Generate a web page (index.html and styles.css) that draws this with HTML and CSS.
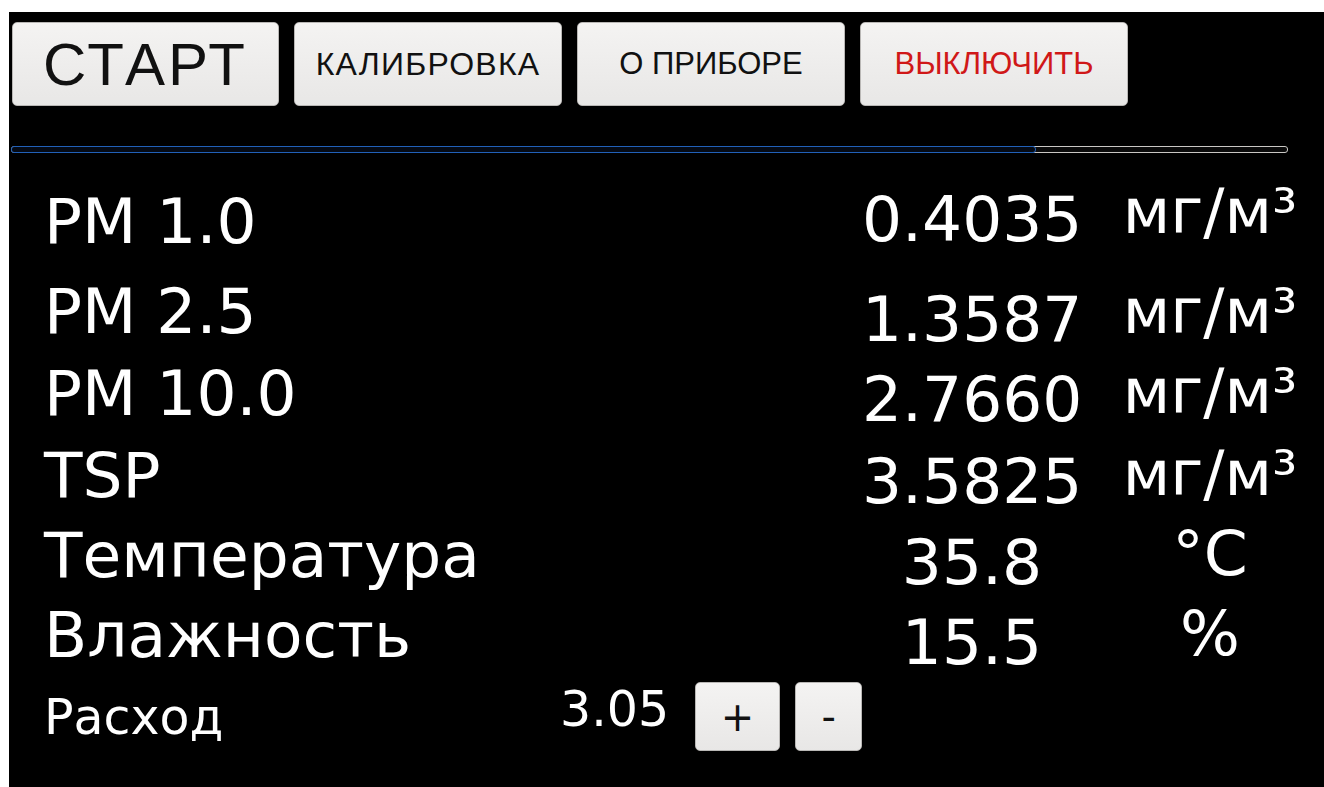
FILE: index.html
```html
<!DOCTYPE html>
<html lang="ru">
<head>
<meta charset="utf-8">
<title>Пылемер</title>
<link rel="stylesheet" href="styles.css">
</head>
<body>
<main class="panel">
  <nav class="toolbar">
    <button class="btn btn-start">СТАРТ</button>
    <button class="btn btn-calib">КАЛИБРОВКА</button>
    <button class="btn">О ПРИБОРЕ</button>
    <button class="btn btn-off">ВЫКЛЮЧИТЬ</button>
  </nav>

  <div class="progress"><div class="progress-fill" style="width: 80.4%"></div></div>

  <section class="readings">
    <div class="label">PM 1.0</div>
    <div class="value v-r1">0.4035</div>
    <div class="unit u-r1">мг/м³</div>

    <div class="label">PM 2.5</div>
    <div class="value v-r2">1.3587</div>
    <div class="unit">мг/м³</div>

    <div class="label">PM 10.0</div>
    <div class="value v-r3">2.7660</div>
    <div class="unit u-r3">мг/м³</div>

    <div class="label">TSP</div>
    <div class="value v-r3">3.5825</div>
    <div class="unit u-r3">мг/м³</div>

    <div class="label">Температура</div>
    <div class="value v-r5">35.8</div>
    <div class="unit u-r3">°C</div>

    <div class="label">Влажность</div>
    <div class="value v-r5">15.5</div>
    <div class="unit u-r3">%</div>

    <div class="flow-row">
      <div class="flow-label">Расход</div>
      <div class="flow-value">3.05</div>
      <div class="flow-buttons">
        <button class="btn btn-small btn-plus">+</button>
        <button class="btn btn-small btn-minus">-</button>
      </div>
    </div>
  </section>
</main>
</body>
</html>
```

FILE: styles.css
```css
html, body {
  margin: 0;
  padding: 0;
  background: #ffffff;
}

.panel {
  margin: 12px 0 0 9px;
  width: 1315px;
  height: 775px;
  background: #000000;
  box-sizing: border-box;
  padding: 10px 0 0 0;
  overflow: hidden;
}

/* top button bar */
.toolbar {
  display: flex;
  gap: 15px;
  padding-left: 3px;
}

.btn {
  font-family: "Liberation Sans", Arial, sans-serif;
  color: #111111;
  background: linear-gradient(#f4f3f2, #e8e7e6);
  border: 1px solid #b9b7b5;
  border-radius: 5px;
  padding: 0;
  margin: 0;
  display: flex;
  align-items: center;
  justify-content: center;
  cursor: pointer;
}

.toolbar .btn {
  width: 268px;
  height: 84px;
  font-size: 31px;
}

.toolbar .btn-start {
  font-size: 60px;
  letter-spacing: 3px;
  width: 267px;
}

.toolbar .btn-calib {
  font-size: 32px;
  letter-spacing: 1.2px;
}

.toolbar .btn-off {
  color: #d01818;
}

/* progress indicator */
.progress {
  margin: 40px 0 0 2px;
  width: 1277px;
  height: 7px;
  box-sizing: border-box;
  border: 1px solid #c9c7c4;
  border-radius: 3px;
  background: #0a0a0a;
  position: relative;
}

.progress-fill {
  position: absolute;
  left: -1px;
  top: -1px;
  height: 7px;
  box-sizing: border-box;
  border: 1.5px solid #2160b8;
  border-radius: 3px;
  background: #050a14;
}

/* measurement table */
.readings {
  margin-top: 38px;
  padding-left: 35px;
  display: grid;
  grid-template-columns: 818px 220px 256px;
  grid-template-rows: 90px 82px 82px 80px 80px 80px auto;
  font-family: "DejaVu Sans", "Noto Sans", sans-serif;
  color: #ffffff;
  font-size: 63px;
  line-height: 62px;
}

.label,
.value,
.unit {
  align-self: start;
  white-space: nowrap;
}

.value {
  text-align: center;
}

.unit {
  text-align: center;
}

.v-r1 { margin-top: -2px; }
.u-r1 { margin-top: -10px; }
.v-r2 { margin-top: 8px; }
.v-r3 { margin-top: 6px; }
.u-r3 { margin-top: -2px; }
.v-r5 { margin-top: 7px; }

/* flow rate row */
.flow-row {
  grid-column: 1 / -1;
  display: flex;
  align-items: flex-start;
}

.flow-label {
  width: 516px;
  font-size: 49px;
  line-height: 48px;
  margin-top: 9px;
}

.flow-value {
  font-size: 49px;
  line-height: 48px;
  margin-top: 1px;
}

.flow-buttons {
  display: flex;
  gap: 15px;
  margin-left: 26px;
  margin-top: -3px;
}

.btn-small {
  height: 69px;
  font-family: "DejaVu Sans", sans-serif;
  font-size: 40px;
  color: #111111;
}

.btn-plus { width: 85px; }
.btn-minus { width: 67px; }
```
